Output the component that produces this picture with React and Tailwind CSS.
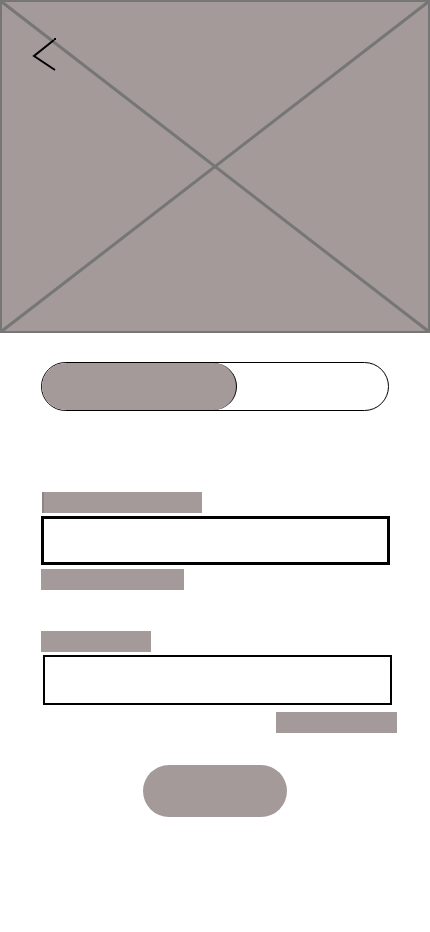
export default function App() {
  return (
    <div className="w-[430px] min-h-[932px] bg-white flex flex-col" style={{ fontFamily: '"Liberation Sans", sans-serif' }}>
      <div className="relative h-[333px] w-full bg-[#a39a99] border-2 border-[#767676]">
        <svg className="absolute inset-0 w-full h-full" viewBox="0 0 426 329" preserveAspectRatio="none">
          <line x1="0" y1="0" x2="426" y2="329" stroke="#767676" strokeWidth="3" />
          <line x1="426" y1="0" x2="0" y2="329" stroke="#767676" strokeWidth="3" />
        </svg>
        <svg className="absolute left-[28px] top-[33px]" width="30" height="40" viewBox="0 0 30 40">
          <polyline points="24,5 4,21 25,35" fill="none" stroke="#000" strokeWidth="2" />
          <rect x="24" y="3" width="2" height="2" fill="#000" />
        </svg>
      </div>

      <div className="ml-[41px] mt-[29px] w-[348px] h-[49px] rounded-full border border-black flex overflow-hidden">
        <div className="w-[195px] h-full rounded-full bg-[#a39a99] border-r border-black" />
      </div>

      <div className="ml-[42px] mt-[81px] w-[160px] h-[21px] bg-[#a39a99] border-l-2 border-[#8d8584]" />
      <div className="ml-[41px] mt-[3px] w-[349px] h-[49px] border-[3px] border-black" />
      <div className="ml-[41px] mt-[4px] w-[143px] h-[21px] bg-[#a39a99]" />

      <div className="ml-[41px] mt-[41px] w-[110px] h-[21px] bg-[#a39a99]" />
      <div className="ml-[43px] mt-[3px] w-[349px] h-[50px] border-2 border-black" />
      <div className="ml-[276px] mt-[7px] w-[121px] h-[21px] bg-[#a39a99]" />

      <div className="ml-[143px] mt-[32px] w-[144px] h-[52px] rounded-full bg-[#a39a99]" />
    </div>
  );
}
